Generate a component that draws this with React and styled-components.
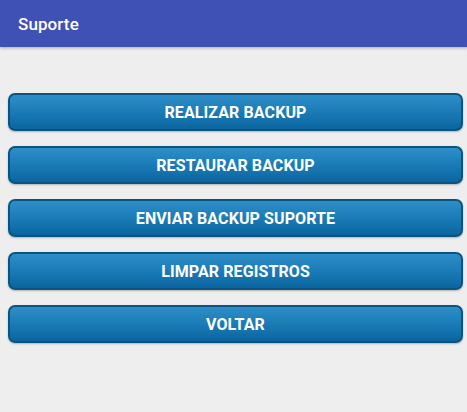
import React from "react";
import styled, { createGlobalStyle } from "styled-components";

const Global = createGlobalStyle`
  html, body { margin: 0; padding: 0; background: #eeeeee; }
  body { font-family: Roboto, "Noto Sans", sans-serif; }
`;

const Page = styled.div`
  width: 467px;
  height: 412px;
  background: #eeeeee;
  display: flex;
  flex-direction: column;
  overflow: hidden;
`;

const Toolbar = styled.header`
  height: 47px;
  flex: none;
  background: #3f51b5;
  display: flex;
  align-items: center;
  padding: 0 18px;
  box-shadow: 0 1px 3px rgba(0, 0, 0, 0.3);
  position: relative;
  z-index: 1;
`;

const Title = styled.h1`
  margin: 0;
  color: #ffffff;
  font-family: Roboto, sans-serif;
  font-weight: 500;
  font-size: 17px;
  letter-spacing: 0.1px;
`;

const List = styled.main`
  display: flex;
  flex-direction: column;
  gap: 15px;
  padding: 46px 4px 0 8px;
`;

const ActionButton = styled.button`
  height: 38px;
  width: 455px;
  border: 2px solid #0a5482;
  border-radius: 7px;
  background: linear-gradient(to bottom, #2d8ec8 0%, #1b7bb6 50%, #0a659e 100%);
  color: #ffffff;
  font-family: Roboto, sans-serif;
  font-weight: 700;
  font-size: 16px;
  letter-spacing: 0.1px;
  display: flex;
  align-items: center;
  justify-content: center;
  box-shadow: 0 1px 2px rgba(0, 0, 0, 0.25);
  padding: 0;
  cursor: pointer;
`;

const items = [
  "REALIZAR BACKUP",
  "RESTAURAR BACKUP",
  "ENVIAR BACKUP SUPORTE",
  "LIMPAR REGISTROS",
  "VOLTAR",
];

export default function App() {
  return (
    <>
      <Global />
      <Page>
        <Toolbar>
          <Title>Suporte</Title>
        </Toolbar>
        <List>
          {items.map((t) => (
            <ActionButton key={t}>{t}</ActionButton>
          ))}
        </List>
      </Page>
    </>
  );
}
